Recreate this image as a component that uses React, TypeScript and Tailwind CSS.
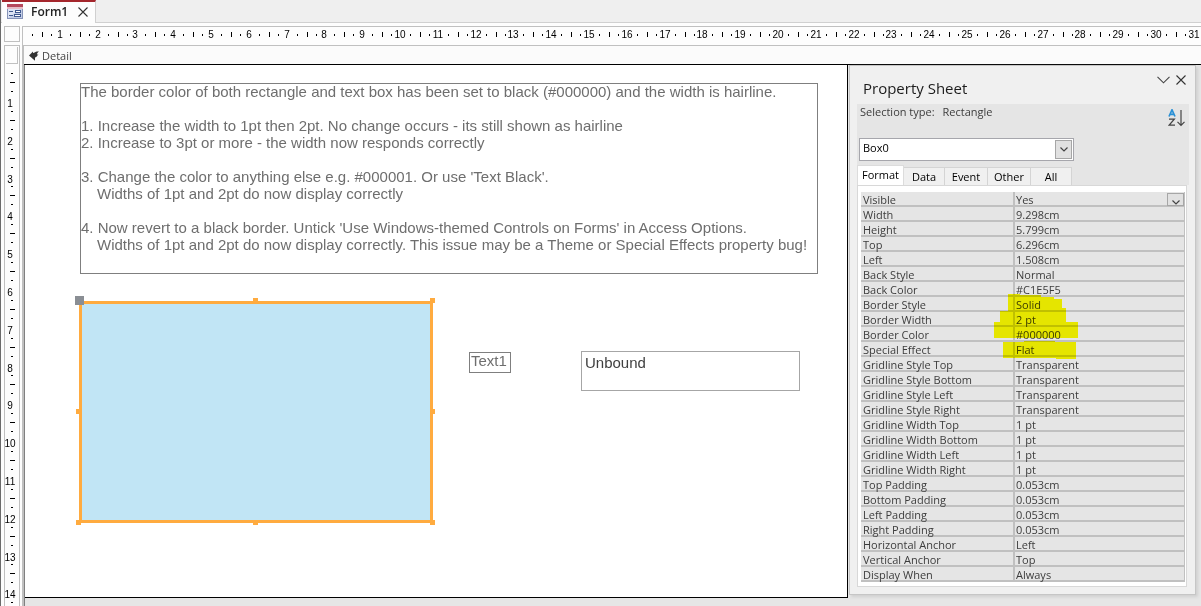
import React from "react";

const CM = 37.8;

const properties: [string, string][] = [
  ["Visible", "Yes"],
  ["Width", "9.298cm"],
  ["Height", "5.799cm"],
  ["Top", "6.296cm"],
  ["Left", "1.508cm"],
  ["Back Style", "Normal"],
  ["Back Color", "#C1E5F5"],
  ["Border Style", "Solid"],
  ["Border Width", "2 pt"],
  ["Border Color", "#000000"],
  ["Special Effect", "Flat"],
  ["Gridline Style Top", "Transparent"],
  ["Gridline Style Bottom", "Transparent"],
  ["Gridline Style Left", "Transparent"],
  ["Gridline Style Right", "Transparent"],
  ["Gridline Width Top", "1 pt"],
  ["Gridline Width Bottom", "1 pt"],
  ["Gridline Width Left", "1 pt"],
  ["Gridline Width Right", "1 pt"],
  ["Top Padding", "0.053cm"],
  ["Bottom Padding", "0.053cm"],
  ["Left Padding", "0.053cm"],
  ["Right Padding", "0.053cm"],
  ["Horizontal Anchor", "Left"],
  ["Vertical Anchor", "Top"],
  ["Display When", "Always"],
];

const tabs = ["Format", "Data", "Event", "Other", "All"];

const digitClass =
  "fill-black font-['Liberation_Sans_Narrow','Liberation_Sans',sans-serif] text-[10px]";

function HorizontalRuler() {
  const units = Array.from({ length: 31 }, (_, i) => i);
  return (
    <svg className="block h-full w-full" aria-label="Horizontal ruler" shapeRendering="crispEdges">
      {units.map((n) => {
        const x = n * CM;
        return (
          <g key={n} fill="#000">
            <rect x={Math.round(x + 9)} y="7" width="1" height="2" />
            <rect x={Math.round(x + 19)} y="5" width="1" height="5" />
            <rect x={Math.round(x + 28)} y="7" width="1" height="2" />
            <text x={Math.round(x + CM - 1)} y="11" textAnchor="middle" className={digitClass}>
              {n + 1}
            </text>
          </g>
        );
      })}
    </svg>
  );
}

function VerticalRuler() {
  const units = Array.from({ length: 14 }, (_, i) => i);
  return (
    <svg className="block h-full w-full" aria-label="Vertical ruler" shapeRendering="crispEdges">
      {units.map((n) => {
        const y = n * CM;
        return (
          <g key={n} fill="#000">
            <rect x="6" y={Math.round(y + 9)} width="2" height="1" />
            <rect x="5" y={Math.round(y + 18)} width="5" height="1" />
            <rect x="6" y={Math.round(y + 27)} width="2" height="1" />
            <text x="5" y={Math.round(y + 43)} textAnchor="middle" className={digitClass}>
              {n + 1}
            </text>
          </g>
        );
      })}
      <rect x="6" y={Math.round(14 * CM + 9)} width="2" height="1" />
    </svg>
  );
}

function FormIcon() {
  return (
    <svg width="16" height="15" viewBox="0 0 16 15" aria-hidden="true">
      <rect x="0.5" y="1.5" width="15" height="13" fill="#dde4f4" stroke="#8794b8" />
      <path d="M1 14L15 4V14Z" fill="#c3cde6" />
      <rect x="0" y="0" width="16" height="3" fill="#b5485c" />
      <rect x="0" y="3" width="16" height="2" fill="#e6bcc6" />
      <rect x="2" y="7" width="4" height="1" fill="#41598f" />
      <rect x="2" y="11" width="4" height="1" fill="#41598f" />
      <rect x="8.500" y="6.500" width="5" height="2" fill="#fff" stroke="#41598f" />
      <rect x="7.500" y="10.500" width="6" height="2" fill="#fff" stroke="#41598f" />
    </svg>
  );
}

function CloseIcon() {
  return (
    <svg width="10" height="10" viewBox="0 0 10 10" aria-hidden="true">
      <path d="M.5.5l9 9M9.5.5l-9 9" stroke="#333" strokeWidth="1.1" fill="none" />
    </svg>
  );
}

function Chevron() {
  return (
    <svg width="8" height="5" viewBox="0 0 8 5" aria-hidden="true">
      <path d="M.5.5L4 4 7.500.5" stroke="#444" strokeWidth="1.2" fill="none" />
    </svg>
  );
}

function FormCanvas() {
  return (
    <div className="relative mb-2 min-w-0 flex-1 border-r border-b border-black bg-white font-['Liberation_Sans',sans-serif] text-[15px] leading-[17px] text-[#6e6e6e]">
      <div className="absolute top-[18px] left-[55px] h-[191px] w-[738px] border border-[#7f7f7f] whitespace-nowrap">
        <div className="-mt-px">
          <p>The border color of both rectangle and text box has been set to black (#000000) and the width is hairline.</p>
          <p className="mt-[17px]">1. Increase the width to 1pt then 2pt. No change occurs - its still shown as hairline</p>
          <p>2. Increase to 3pt or more - the width now responds correctly</p>
          <p className="mt-[17px]">3. Change the color to anything else e.g. #000001. Or use 'Text Black'.</p>
          <p className="pl-4">Widths of 1pt and 2pt do now display correctly</p>
          <p className="mt-[17px]">4. Now revert to a black border. Untick 'Use Windows-themed Controls on Forms' in Access Options.</p>
          <p className="pl-4">Widths of 1pt and 2pt do now display correctly. This issue may be a Theme or Special Effects property bug!</p>
        </div>
      </div>

      <div className="absolute top-[236px] left-[54px] h-[222px] w-[354px] border-3 border-[#ffab3f] bg-[#c1e5f5]">
        <i className="absolute -top-2 -left-[7px] size-[9px] bg-[#8a8e94]" />
        <i className="absolute -top-1.5 left-[171px] size-[5px] bg-[#ffab3f]" />
        <i className="absolute -top-1.5 -right-[5px] size-[5px] bg-[#ffab3f]" />
        <i className="absolute top-[105px] -left-1.5 size-[5px] bg-[#ffab3f]" />
        <i className="absolute top-[105px] -right-[5px] size-[5px] bg-[#ffab3f]" />
        <i className="absolute -bottom-[5px] -left-1.5 size-[5px] bg-[#ffab3f]" />
        <i className="absolute -bottom-[5px] left-[171px] size-[5px] bg-[#ffab3f]" />
        <i className="absolute -right-[5px] -bottom-[5px] size-[5px] bg-[#ffab3f]" />
      </div>

      <label
        htmlFor="unbound"
        className="absolute top-[287px] left-[444px] flex h-[21px] w-[42px] border border-[#7f7f7f] pl-px"
      >
        <span className="-mt-px">Text1</span>
      </label>
      <textarea
        id="unbound"
        readOnly
        defaultValue="Unbound"
        className="absolute top-[286px] left-[556px] h-10 w-[219px] resize-none overflow-hidden border border-[#a6a6a6] px-[3px] py-0.5 text-[#404040] outline-none"
      />
    </div>
  );
}

function PropertyTable() {
  return (
    <div className="relative">
      <table className="w-full table-fixed border-collapse text-[11px] leading-[13px] text-[#3c3c3c]">
        <colgroup>
          <col className="w-[154px]" />
          <col />
        </colgroup>
        <tbody>
          {properties.map(([name, value], i) => (
            <tr key={name} className="h-[15px] bg-[#e5e5e5] shadow-[inset_0_-2px_0_#c0c0c0]">
              <th scope="row" className="h-[15px] p-0 pl-0.5 text-left font-normal shadow-[inset_-2px_0_0_#c0c0c0]">
                <div className="h-[15px] pt-px">{name}</div>
              </th>
              <td className="h-[15px] p-0 pl-px shadow-[inset_-1px_0_0_#c0c0c0]">
                <div className="flex h-[15px] justify-between pt-px pr-px">
                  <span>{value}</span>
                  {i === 0 && (
                    <button
                      type="button"
                      aria-label="Show values for Visible"
                      className="flex h-[13px] w-[17px] items-end justify-center border border-[#a6a6a6] bg-[#e1e1e1]"
                    >
                      <Chevron />
                    </button>
                  )}
                </div>
              </td>
            </tr>
          ))}
        </tbody>
      </table>
      <svg
        className="pointer-events-none absolute top-0 left-0 mix-blend-multiply"
        width="230"
        height="170"
        fill="#ff0"
        aria-hidden="true"
      >
        <path d="M147 102H159V103H180V105H193V107H201V116H205V130H217V146H133V130H139V119H147Z" />
        <path d="M142 150H163V149H194V150H215V167H195V166H142Z" />
      </svg>
    </div>
  );
}

function PropertySheet() {
  return (
    <aside className="mr-[5px] mb-[11px] ml-px w-[347px] shrink-0 border border-[#c6c6c6] bg-[#f0f0f0] pr-[6px] pb-[7px] pl-[7px] shadow-[2px_2px_3px_#cfcfcf]">
      <header className="flex h-[38px] items-start justify-between pr-[3px] pl-[6px]">
        <h2 className="pt-3 text-[15px] leading-5 text-[#1c1c1c]">Property Sheet</h2>
        <div className="flex items-center gap-[6px] pt-[9px]">
          <button type="button" aria-label="Task pane options">
            <svg width="13" height="8" viewBox="0 0 13 8" aria-hidden="true">
              <path d="M.5.8l6 6 6-6" stroke="#444" strokeWidth="1.1" fill="none" />
            </svg>
          </button>
          <button type="button" aria-label="Close property sheet">
            <CloseIcon />
          </button>
        </div>
      </header>

      <div className="bg-[#e5e5e5]">
        <div className="flex h-[34px] items-start justify-between pr-1 pl-[3px] text-[11px] text-[#3c3c3c]">
          <p className="flex gap-2 leading-4">
            <span>Selection type:</span>
            <span>Rectangle</span>
          </p>
          <button type="button" aria-label="Sort properties" className="mt-[5px]">
            <svg width="17" height="18" viewBox="0 0 17 18" fill="none" aria-hidden="true">
              <path d="M1 7.500L4 .8 7 7.500M2 5.300H6" stroke="#2b91d6" strokeWidth="1.700" />
              <path d="M1 10.200H6.300L1.200 16.200H7" stroke="#444" strokeWidth="1.300" />
              <path d="M13 1V16M9.500 12.800L13 16.300 16.500 12.800" stroke="#444" strokeWidth="1.200" />
            </svg>
          </button>
        </div>

        <div className="relative ml-0.5 h-[23px] w-[215px] border border-[#a6a6ac] bg-white">
          <select
            aria-label="Selected object"
            className="block h-[18px] w-full appearance-none bg-transparent pl-[3px] text-[11px] leading-[18px] text-black outline-none"
          >
            <option>Box0</option>
          </select>
          <span className="pointer-events-none absolute top-px right-px flex h-[19px] w-[17px] items-center justify-center border border-[#a6a6a6] bg-[#e1e1e1]">
            <Chevron />
          </span>
        </div>

        <div role="tablist" className="flex h-6 items-end pt-1 text-[11px] leading-4 text-black">
          {tabs.map((tab, i) => (
            <button
              key={tab}
              type="button"
              role="tab"
              aria-selected={i === 0}
              className={
                i === 0
                  ? "h-5 w-[47px] border border-b-0 border-[#dcdcdc] bg-white pb-0.5"
                  : i === 1 || i === 4
                    ? "h-[18px] w-[41px] border-t border-r border-[#d4d4d4] bg-[#f0f0f0]"
                    : "h-[18px] w-[43px] border-t border-r border-[#d4d4d4] bg-[#f0f0f0]"
              }
            >
              {tab}
            </button>
          ))}
        </div>
      </div>

      <div className="mr-0.5 border border-[#d8d8d8] bg-white pt-[6px] pr-px pb-1 pl-[3px]">
        <PropertyTable />
      </div>
    </aside>
  );
}

export default function App() {
  return (
    <div className="flex min-h-screen flex-col border-l border-[#6b6b6b] bg-[#fdfdfd] font-['Open_Sans','Noto_Sans',sans-serif]">
      <nav className="flex h-[23px] border-b border-[#d0d0d0] bg-[#efefef]">
        <div className="-mb-px ml-px flex w-[94px] items-center border-t-2 border-r border-t-[#a4262c] border-r-[#d0d0d0] bg-[#fdfdfd] pb-0.5 pl-[5px]">
          <FormIcon />
          <span className="ml-2 text-[12px] leading-4 font-semibold text-[#222]">Form1</span>
          <button type="button" aria-label="Close Form1" className="ml-auto pr-[7px]">
            <CloseIcon />
          </button>
        </div>
      </nav>

      <div className="flex h-[22px] pt-[3px]">
        <div className="ml-[3px] size-4 border border-[#c0c0c0]" />
        <div className="ml-0.5 h-[19px] min-w-0 flex-1 overflow-hidden border-t border-l border-[#c0c0c0]">
          <HorizontalRuler />
        </div>
      </div>

      <div className="flex flex-1">
        <div className="mr-0.5 ml-[3px] flex w-4 flex-col border border-b-0 border-[#c0c0c0]">
          <div className="mt-px mr-px ml-px h-[17px] border-r border-b border-[#c0c0c0]" />
          <div className="relative flex-1">
            <div className="absolute inset-0 overflow-hidden">
              <VerticalRuler />
            </div>
          </div>
        </div>
        <div className="flex min-w-0 flex-1 flex-col border-t border-l-2 border-[#c0c0c0]">
          <div className="flex h-[19px] items-center gap-[3px] border-b border-black bg-[#fbfbfb] pt-0.5 pl-[5px] text-[11px] leading-4 text-[#444]">
            <svg width="10" height="10" viewBox="0 0 10 10" fill="#333" aria-hidden="true">
              <path d="M0 4.500L4 .5V2C5.500 1.800 6.500.5 8 .5H10C8.500 1.500 8 2.500 8 3.500H9.500C8.500 4 8 6 6 6.500V9.800L0 4.500Z" />
            </svg>
            Detail
          </div>
          <div className="flex flex-1 border-l border-[#808080] bg-[#e6e6e6]">
            <FormCanvas />
            <PropertySheet />
          </div>
        </div>
      </div>
    </div>
  );
}
